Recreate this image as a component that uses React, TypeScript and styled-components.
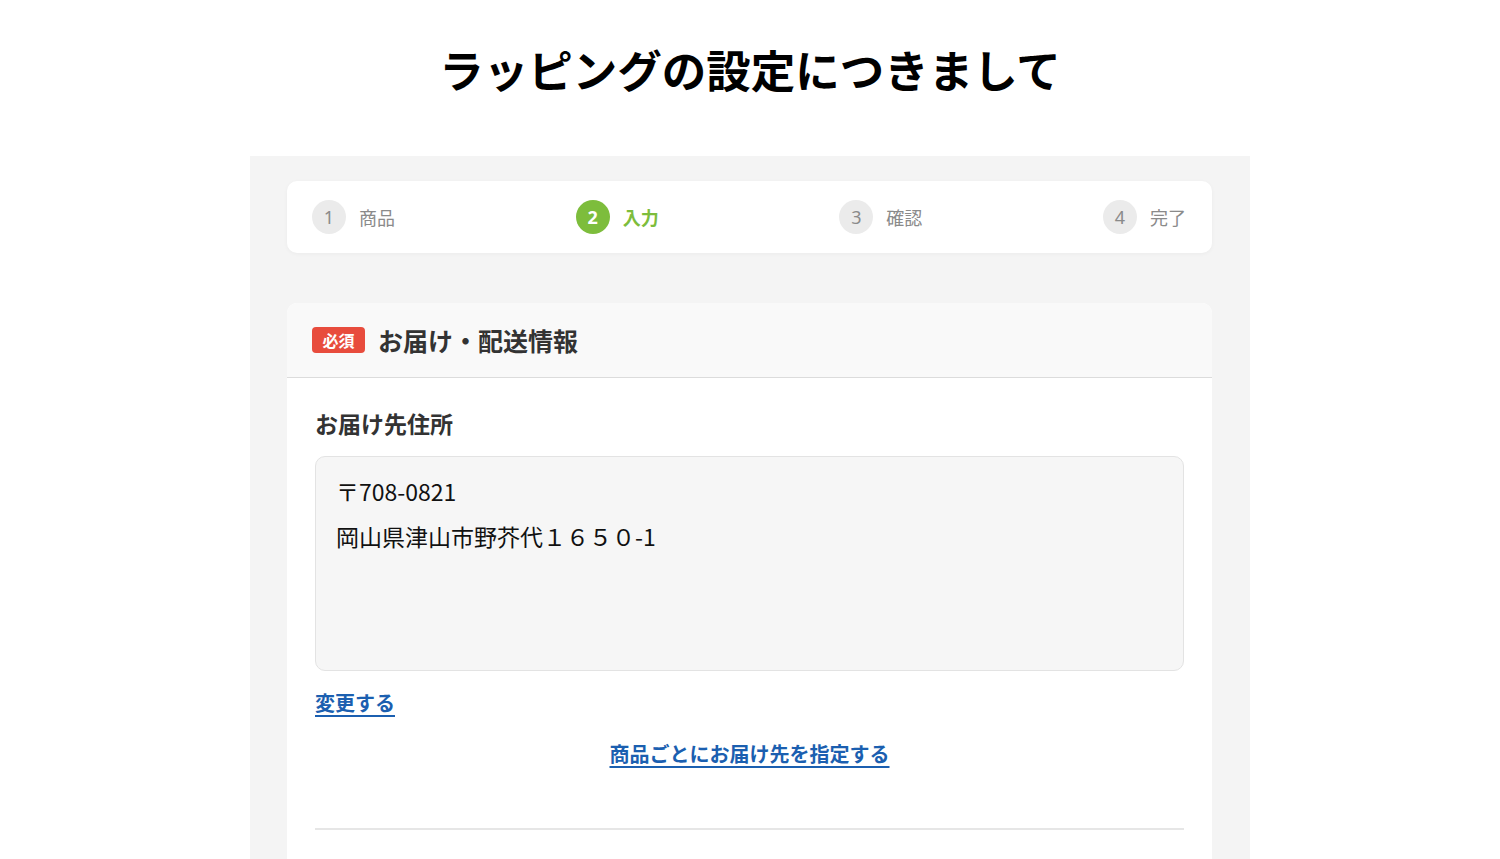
import React from "react";
import styled, { createGlobalStyle } from "styled-components";

const Global = createGlobalStyle`
  html, body { margin: 0; padding: 0; background: #fff; }
  body { font-family: "Noto Sans CJK JP", "Noto Sans", sans-serif; color: #333; }
  * { box-sizing: border-box; }
`;

const Page = styled.div`
  width: 1500px;
  height: 859px;
  overflow: hidden;
  display: flex;
  flex-direction: column;
  align-items: center;
`;

const Title = styled.h1`
  margin: 0;
  padding-top: 37px;
  height: 156px;
  font-size: 44.5px;
  line-height: 64px;
  font-weight: 700;
  color: #000;
  letter-spacing: 0;
`;

const Panel = styled.div`
  width: 1000px;
  flex: 1;
  background: #f4f4f4;
  padding: 25px 38px 0 37px;
  display: flex;
  flex-direction: column;
`;

const Stepper = styled.div`
  height: 72px;
  background: #fff;
  border-radius: 10px;
  box-shadow: 0 1px 4px rgba(0, 0, 0, 0.04);
  display: flex;
  align-items: center;
  justify-content: space-between;
  padding: 0 26px 0 25px;
`;

const Step = styled.div<{ $active?: boolean }>`
  display: flex;
  align-items: center;
  gap: 13px;
  color: ${(p) => (p.$active ? "#7dbd3c" : "#8a8a8a")};
  font-size: 18px;
  font-weight: ${(p) => (p.$active ? 700 : 400)};
`;

const Num = styled.span<{ $active?: boolean }>`
  width: 34px;
  height: 34px;
  border-radius: 50%;
  display: flex;
  align-items: center;
  justify-content: center;
  background: ${(p) => (p.$active ? "#7dbd3c" : "#ebebeb")};
  color: ${(p) => (p.$active ? "#fff" : "#8a8a8a")};
  font-family: "Noto Sans", sans-serif;
  font-size: 18px;
  font-weight: ${(p) => (p.$active ? 700 : 400)};
`;

const Card = styled.div`
  margin-top: 50px;
  background: #fff;
  border-radius: 10px 10px 0 0;
  flex: 1;
  display: flex;
  flex-direction: column;
`;

const CardHead = styled.div`
  height: 75px;
  background: #f9f9f9;
  border-radius: 10px 10px 0 0;
  border-bottom: 1px solid #dcdcdc;
  display: flex;
  align-items: center;
  padding: 0 25px;
  gap: 13px;
`;

const Badge = styled.span`
  width: 53px;
  height: 26px;
  border-radius: 4px;
  background: #e84c3d;
  color: #fff;
  font-size: 16px;
  font-weight: 700;
  display: flex;
  align-items: center;
  justify-content: center;
`;

const HeadText = styled.h2`
  margin: 0;
  font-size: 25px;
  font-weight: 700;
  color: #333;
`;

const CardBody = styled.div`
  padding: 28px 28px 0;
  display: flex;
  flex-direction: column;
`;

const Label = styled.h3`
  margin: 0;
  font-size: 23px;
  line-height: 34px;
  font-weight: 700;
  color: #333;
`;

const AddressBox = styled.div`
  margin-top: 16px;
  height: 215px;
  background: #f6f6f6;
  border: 1px solid #e3e3e3;
  border-radius: 10px;
  padding: 12px 20px;
  font-size: 23px;
  line-height: 45px;
  color: #111;
`;

const Line = styled.div``;

const LinkText = styled.a<{ $center?: boolean }>`
  align-self: ${(p) => (p.$center ? "center" : "flex-start")};
  font-size: 20px;
  font-weight: 700;
  color: #1b5fb0;
  text-decoration: underline;
  text-underline-offset: 4px;
  text-decoration-thickness: 2px;
  line-height: 30px;
  cursor: pointer;
`;

const FirstLink = styled(LinkText)`
  margin-top: 17px;
`;

const SecondLink = styled(LinkText)`
  margin-top: 21px;
`;

const Divider = styled.hr`
  margin: 59px 0 0;
  border: none;
  border-top: 2px solid #e6e6e6;
`;

const steps = [
  { n: "1", label: "商品" },
  { n: "2", label: "入力", active: true },
  { n: "3", label: "確認" },
  { n: "4", label: "完了" },
];

export default function App() {
  return (
    <>
      <Global />
      <Page>
        <Title>ラッピングの設定につきまして</Title>
        <Panel>
          <Stepper>
            {steps.map((s) => (
              <Step key={s.n} $active={s.active}>
                <Num $active={s.active}>{s.n}</Num>
                <span>{s.label}</span>
              </Step>
            ))}
          </Stepper>
          <Card>
            <CardHead>
              <Badge>必須</Badge>
              <HeadText>お届け・配送情報</HeadText>
            </CardHead>
            <CardBody>
              <Label>お届け先住所</Label>
              <AddressBox>
                <Line>〒708-0821</Line>
                <Line>岡山県津山市野芥代１６５０-1</Line>
              </AddressBox>
              <FirstLink>変更する</FirstLink>
              <SecondLink $center>商品ごとにお届け先を指定する</SecondLink>
              <Divider />
            </CardBody>
          </Card>
        </Panel>
      </Page>
    </>
  );
}
